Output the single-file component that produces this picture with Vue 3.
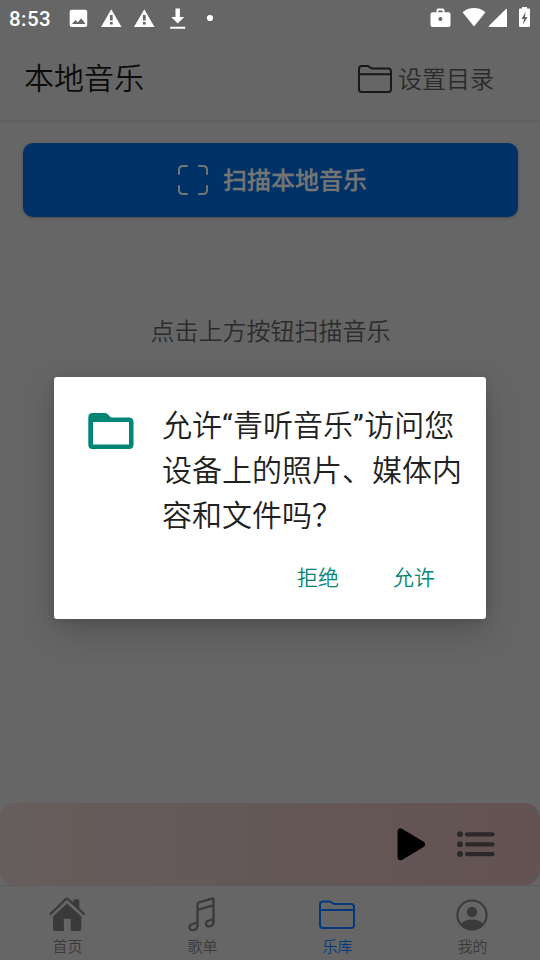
<script setup>
import { ref } from 'vue'

const tabs = [
  { id: 'home', label: '首页' },
  { id: 'songs', label: '歌单' },
  { id: 'library', label: '乐库' },
  { id: 'mine', label: '我的' }
]
const active = ref('library')
</script>

<template>
  <div class="screen">
    <div class="status">
      <span class="time">8:53</span>
      <svg class="status-left" width="150" height="24" viewBox="0 0 150 24" fill="#fff">
        <path fill-rule="evenodd" d="M3.700 10h13.500q2 0 2 2v13.300q0 2-2 2H3.700q-2 0-2-2V12q0-2 2-2zM4 24.300h13.500l-4.300-5.800-3.400 4.300-2.400-2.600z" transform="translate(0 -6.300)" />
        <path fill-rule="evenodd" d="M43.300 3.200 53.500 21H33zM41.900 9v5.400h2.800V9zm0 7v2.600h2.800V16z" />
        <path fill-rule="evenodd" d="M76.300 3.200 86.500 21H66zM74.900 9v5.400h2.800V9zm0 7v2.600h2.800V16z" />
        <path d="M107.500 2.500h4.400v8.500h4.300l-6.500 6.600-6.500-6.600h4.300zM102.200 20.700h15v2.100h-15z" />
        <circle cx="142" cy="12" r="3.100" />
      </svg>
      <svg class="status-right" width="104" height="24" viewBox="0 0 104 24" fill="#fff">
        <path fill-rule="evenodd" d="M2.500 6.300h4V4.200q0-1.700 1.700-1.700h4.600q1.700 0 1.700 1.700v2.100h4q2 0 2 2v10.700q0 2-2 2h-16q-2 0-2-2V8.300q0-2 2-2zM8.300 6.300h4.400V4.400H8.300zM10.400 11a2 2 0 1 0 .01 0z" />
        <path d="M44 20.500 32.500 6.300Q37.500 2 44 2t11.500 4.300z" />
        <path d="M77 3v18H59q-.6-.5 0-1.200L76 3q.5-.4 1 0z" />
        <path fill-rule="evenodd" d="M92 1h5v1.600h2q1 0 1 1v16.400q0 1-1 1h-9q-1 0-1-1V3.600q0-1 1-1h2zM95.500 6l-4 7h2.500l-1 5.500 4.500-7.500H95z" />
      </svg>
    </div>

    <header class="header">
      <h1>本地音乐</h1>
      <div class="directory">
        <svg width="34" height="28" viewBox="0 0 34 28" fill="none" stroke="#181818" stroke-width="2">
          <path d="M1 23.500V4q0-3 3-3h5.500q1 0 1.800.8l1.200 1q.8.700 2 .700H30q3 0 3 3v18q0 2.500-3 2.500H4q-3 0-3-2.500zM1 9.300h32" />
        </svg>
        <span>设置目录</span>
      </div>
    </header>

    <main class="content">
      <button class="scan">
        <svg width="30" height="30" viewBox="0 0 30 30" fill="none" stroke="#757575" stroke-width="2" stroke-linecap="round">
          <path d="M1 9V5q0-4 4-4h4M21 1h4q4 0 4 4v4M29 21v4q0 4-4 4h-4M9 29H5q-4 0-4-4v-4" />
        </svg>
        <span>扫描本地音乐</span>
      </button>
      <p class="hint">点击上方按钮扫描音乐</p>
    </main>

    <section class="player">
      <svg class="play" width="30" height="34" viewBox="0 0 30 34">
        <path d="M4 4v26L26 17z" fill="#000" stroke="#000" stroke-width="6" stroke-linejoin="round" transform="translate(-.4 .3) scale(.98 1)" />
      </svg>
      <svg width="38" height="26" viewBox="0 0 38 26" fill="#2a2828">
        <g v-for="y in [3.2, 13.2, 23]" :key="y">
          <circle cx="3" :cy="y" r="2.900" />
          <rect x="8" :y="y - 2" width="29.600" height="4.200" rx="2" />
        </g>
      </svg>
    </section>

    <nav class="tabs">
      <div v-for="tab in tabs" :key="tab.id" class="tab" :class="{ active: tab.id === active }">
        <svg v-if="tab.id === 'home'" width="37" height="36" viewBox="0 0 37 36" fill="currentColor">
          <path d="M18 7.400 32.300 20.500V33q0 2-2 2h-8.600V23.500q0-.8-.8-.8h-5.200q-.8 0-.8.8V35H6q-2 0-2-2V20.500z" />
          <path d="M1.500 18 16.600 3.400q1.400-1.300 2.800 0L35 18" fill="none" stroke="currentColor" stroke-width="2.200" stroke-linecap="round" />
          <path d="M24.300 4.700q0-1.500 1.500-1.500h3q1.500 0 1.500 1.500V13.500l-6-6z" />
        </svg>
        <svg v-else-if="tab.id === 'songs'" width="37" height="36" viewBox="0 0 37 36" fill="none" stroke="currentColor" stroke-width="2.300" stroke-linejoin="round">
          <path d="M13.500 28.500V8.500q0-1.600 1.500-2.100l13-3.800q1.500-.4 1.500 1.200V25.500M13.500 13.800l16-4.400M13.500 26.500v3q0 3.400-3.300 4.300-4.700 1.200-4.700-2.500 0-2.600 3-3.300zM29.500 23.200v2.900q0 3.300-3.200 4.100-4.300 1-4.300-2.500 0-2.500 3-3.200z" />
        </svg>
        <svg v-else-if="tab.id === 'library'" width="37" height="36" viewBox="0 0 37 36" fill="none" stroke="currentColor" stroke-width="2">
          <path d="M1 29V8.500q0-3 3-3h6.500q1 0 1.800.7l1.500 1.200q.8.600 2 .600H32q3 0 3 3v18q0 3-3 3H4q-3 0-3-3zM1 14h34" />
        </svg>
        <svg v-else width="37" height="36" viewBox="0 0 37 36">
          <circle cx="18" cy="19" r="14.600" fill="none" stroke="currentColor" stroke-width="2" />
          <circle cx="18" cy="16" r="5.200" fill="currentColor" />
          <path d="M7 28q3-4.500 11-4.500t11 4.500q-4 5.600-11 5.600T7 28z" fill="currentColor" />
        </svg>
        <span>{{ tab.label }}</span>
      </div>
    </nav>

    <div class="dialog" role="dialog">
      <div class="message">
        <svg width="46" height="36" viewBox="0 0 46 36">
          <path fill="#018577" fill-rule="evenodd" d="M4.500 0H17q1.500 0 2.500 1l3.500 3.500h18q4.500 0 4.500 4.500v22.500q0 4.500-4.500 4.500H4.500Q.3 36 .3 31.500v-27Q.3 0 4.500 0zM5 9v22.500h36V9z" />
        </svg>
        <p>允许<span class="quote">“</span>青听音乐<span class="quote">”</span>访问您<br>设备上的照片、媒体内<br>容和文件吗？</p>
      </div>
      <div class="actions">
        <button>拒绝</button>
        <button>允许</button>
      </div>
    </div>
  </div>
</template>

<style>
body {
  margin: 0;
  background: #666;
}
</style>

<style scoped>
.screen {
  position: relative;
  display: flex;
  flex-direction: column;
  width: 540px;
  height: 960px;
  overflow: hidden;
  background: #666;
  font-family: Roboto, "Noto Sans CJK SC", sans-serif;
  font-weight: 350;
}
svg {
  display: block;
  flex: none;
}
button {
  border: 0;
  padding: 0;
  background: none;
  font: inherit;
}
.status {
  display: flex;
  align-items: center;
  height: 36px;
  padding: 0 6px 0 9px;
}
.time {
  width: 59px;
  padding-top: 2px;
  color: #fff;
  font-size: 20.500px;
  font-weight: 500;
  letter-spacing: .45px;
  line-height: 24px;
}
.status-right {
  margin-left: auto;
}
.status-left {
  overflow: visible;
}
.header {
  display: flex;
  align-items: center;
  justify-content: space-between;
  box-sizing: border-box;
  height: 84px;
  padding: 2px 46px 0 24px;
  box-shadow: 0 1px 2px #5c5c5c;
}
h1 {
  margin: 0;
  color: #0c0c0c;
  font-size: 30px;
  font-weight: inherit;
  line-height: 44px;
}
.directory {
  display: flex;
  align-items: center;
  gap: 6px;
  color: #2a2a2a;
  font-size: 24px;
  line-height: 36px;
}
.directory svg {
  margin-top: -1px;
}
.directory span {
  padding-top: 2px;
}
.content {
  flex: 1;
  padding: 23px 22px 0 23px;
}
.scan {
  display: flex;
  align-items: center;
  justify-content: center;
  gap: 15px;
  width: 100%;
  height: 74px;
  padding-left: 4px;
  border-radius: 10px;
  background: #003167;
  box-shadow: 0 1px 3px #4b4b4b;
  color: #757575;
  font-size: 24px;
  font-weight: 500;
  line-height: 36px;
  -webkit-text-stroke: .3px #757575;
}
.scan span {
  padding-top: 2px;
}
.hint {
  margin: 97px 0 0;
  color: #2c2c2c;
  font-size: 24px;
  line-height: 36px;
  text-align: center;
}
.player {
  display: flex;
  align-items: center;
  justify-content: flex-end;
  gap: 30px;
  box-sizing: border-box;
  height: 82px;
  padding-right: 45px;
  border-radius: 15px;
  background: linear-gradient(90deg, #665e5c, #645857 50%, #635352);
}
.tabs {
  display: grid;
  grid-template-columns: repeat(4, 1fr);
  box-sizing: border-box;
  height: 75px;
  border-top: 1px solid #5c5c5c;
}
.tab {
  display: flex;
  flex-direction: column;
  align-items: center;
  padding-top: 10px;
  color: #3a3a3a;
  font-size: 15px;
  line-height: 22px;
}
.tab span {
  margin-top: 4px;
}
.tab.active {
  color: #003a7c;
}
.dialog {
  position: absolute;
  top: 377px;
  left: 54px;
  box-sizing: border-box;
  width: 432px;
  height: 242px;
  padding: 26px 24px 0 34px;
  border-radius: 3px;
  background: #fff;
  box-shadow: 0 12px 36px rgba(0, 0, 0, .2), 0 2px 8px rgba(0, 0, 0, .12);
}
.message {
  display: flex;
  align-items: flex-start;
  gap: 28px;
}
.message svg {
  margin-top: 10px;
}
.message p {
  margin: 0;
  color: #212121;
  font-size: 30px;
  line-height: 45px;
  white-space: nowrap;
}
.quote {
  font-weight: 400;
  letter-spacing: .4px;
}
.actions {
  display: flex;
  justify-content: flex-end;
  gap: 54px;
  margin-top: 24px;
  padding-right: 27px;
}
.actions button {
  color: #018577;
  font-size: 21px;
  line-height: 32px;
}
</style>
